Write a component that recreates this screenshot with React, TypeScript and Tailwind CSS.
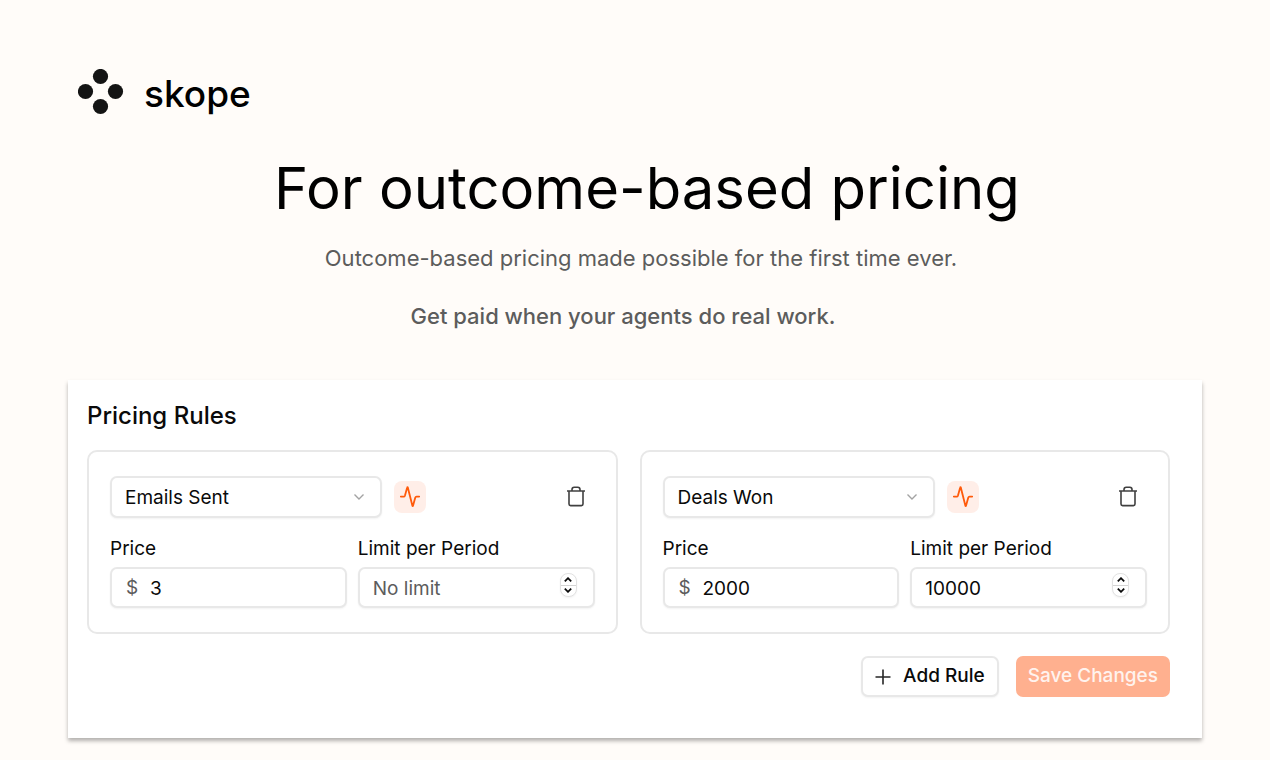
import { useId, useState } from 'react';

type Rule = {
  metric: string;
  price: string;
  limit: string;
};

const METRICS = ['Emails Sent', 'Deals Won'];

const initialRules: Rule[] = [
  { metric: 'Emails Sent', price: '3', limit: '' },
  { metric: 'Deals Won', price: '2000', limit: '10000' },
];

function Logo() {
  return (
    <svg viewBox="0 0 46 46" className="w-[46px] h-[46px]" fill="#141414" aria-hidden="true">
      <circle cx="22.5" cy="7.5" r="7.6" />
      <circle cx="7.5" cy="22.5" r="7.6" />
      <circle cx="37.5" cy="22.5" r="7.6" />
      <circle cx="22.5" cy="37.5" r="7.6" />
    </svg>
  );
}

function ActivityIcon() {
  return (
    <svg
      viewBox="0 0 20 22"
      className="w-5 h-[22px]"
      fill="none"
      stroke="#ff5a0a"
      strokeWidth="1.8"
      strokeLinecap="round"
      strokeLinejoin="round"
      aria-hidden="true"
    >
      <path d="M.8 10.600h2.900c.6 0 1-.3 1.200-.9L7.200 1.500c.1-.4.5-.4.6 0l4.600 18.200c.1.4.5.4.6 0l2.300-8.200c.2-.6.6-.9 1.200-.9h2.700" />
    </svg>
  );
}

function TrashIcon() {
  return (
    <svg
      viewBox="0 0 20 22"
      className="w-5 h-[22px]"
      fill="none"
      stroke="#404040"
      strokeWidth="1.6"
      strokeLinejoin="round"
      aria-hidden="true"
    >
      <path d="M1 5h18M3 5v13c0 1 .7 1.600 1.600 1.600h10.800c.9 0 1.600-.6 1.600-1.600V5M6 5V3.500c0-1.400.9-2.300 2.200-2.300h3.600C13.100 1.200 14 2.100 14 3.500V5" />
    </svg>
  );
}

function ChevronIcon() {
  return (
    <svg
      viewBox="0 0 12 8"
      className="absolute right-[17px] top-[17px] w-3 h-2 pointer-events-none"
      fill="none"
      stroke="#a3a3a3"
      strokeWidth="1.4"
      aria-hidden="true"
    >
      <path d="M1.500 1.500 6 6l4.500-4.500" />
    </svg>
  );
}

function Stepper({ onStep }: { onStep: (delta: number) => void }) {
  return (
    <div className="absolute right-[18px] top-1.5 w-[17px] h-6 flex flex-col rounded-lg border border-[#e2e2e2] bg-white divide-y divide-[#d4d4d4] shadow-xs">
      <button type="button" aria-label="Increase limit" onClick={() => onStep(1)} className="flex-1 flex items-center justify-center">
        <svg viewBox="0 0 8 5" className="w-2 h-[5px]" fill="none" stroke="#0a0a0a" strokeWidth="1.8">
          <path d="M.8 4.300 4 1.200l3.200 3.100" />
        </svg>
      </button>
      <button type="button" aria-label="Decrease limit" onClick={() => onStep(-1)} className="flex-1 flex items-center justify-center">
        <svg viewBox="0 0 8 5" className="w-2 h-[5px]" fill="none" stroke="#0a0a0a" strokeWidth="1.8">
          <path d="M.8.700 4 3.800l3.200-3.100" />
        </svg>
      </button>
    </div>
  );
}

function RuleCard({ rule, onChange, onRemove }: { rule: Rule; onChange: (rule: Rule) => void; onRemove: () => void }) {
  const id = useId();

  const handleStep = (delta: number) => {
    const next = Math.max(0, Number(rule.limit || 0) + delta);
    onChange({ ...rule, limit: String(next) });
  };

  return (
    <article className="rounded-[10px] border-2 border-[#e8e8e8] px-[21px] py-6">
      {/* Metric */}
      <div className="flex items-center gap-3">
        <div className="relative w-[272px]">
          <select
            aria-label="Metric"
            value={rule.metric}
            onChange={e => onChange({ ...rule, metric: e.target.value })}
            className="block w-full h-[42px] appearance-none rounded-[7px] border-2 border-[#e8e8e8] bg-white pl-[13px] pr-10 pt-0.5 shadow-xs"
          >
            {METRICS.map(metric => (
              <option key={metric}>{metric}</option>
            ))}
          </select>
          <ChevronIcon />
        </div>
        <span className="w-8 h-8 rounded-lg bg-[#ffeee8] flex items-center justify-center">
          <ActivityIcon />
        </span>
        <button type="button" aria-label="Delete rule" onClick={onRemove} className="ml-auto mr-[9px]">
          <TrashIcon />
        </button>
      </div>

      {/* Price and limit */}
      <div className="grid grid-cols-2 gap-[11px] mt-[19px]">
        <div>
          <label htmlFor={`${id}-price`} className="block leading-6">
            Price
          </label>
          <div className="relative mt-1.5">
            <span className="absolute left-4 top-[9px] leading-6 text-[#5c5c5c]">$</span>
            <input
              id={`${id}-price`}
              inputMode="numeric"
              value={rule.price}
              onChange={e => onChange({ ...rule, price: e.target.value })}
              className="block w-full h-[41px] rounded-[7px] border-2 border-[#e8e8e8] bg-white pl-[38px] pr-3 pt-0.5 shadow-xs"
            />
          </div>
        </div>
        <div>
          <label htmlFor={`${id}-limit`} className="block leading-6">
            Limit per Period
          </label>
          <div className="relative mt-1.5">
            <input
              id={`${id}-limit`}
              inputMode="numeric"
              placeholder="No limit"
              value={rule.limit}
              onChange={e => onChange({ ...rule, limit: e.target.value })}
              className="block w-full h-[41px] rounded-[7px] border-2 border-[#e8e8e8] bg-white pl-[13px] pr-10 pt-0.5 shadow-xs placeholder:text-[#5c5c5c]"
            />
            <Stepper onStep={handleStep} />
          </div>
        </div>
      </div>
    </article>
  );
}

export default function App() {
  const [rules, setRules] = useState(initialRules);

  const updateRule = (index: number, rule: Rule) => {
    setRules(prev => prev.map((item, i) => (i === index ? rule : item)));
  };

  const removeRule = (index: number) => {
    setRules(prev => prev.filter((_, i) => i !== index));
  };

  const addRule = () => {
    setRules(prev => [...prev, { metric: METRICS[0], price: '', limit: '' }]);
  };

  return (
    <div className="min-h-screen bg-[#fffcf9] px-[68px] pt-[68px] pb-[22px] font-['Inter',sans-serif] text-[#0a0a0a]">
      {/* Brand */}
      <header className="flex items-center gap-5 pl-[10px]">
        <Logo />
        <span className="pt-1 text-[37px] leading-[44px] font-medium text-black">skope</span>
      </header>

      {/* Hero */}
      <section className="mt-8 text-center text-[22px] leading-8 text-[#5c5c5c]">
        <h1 className="pl-6 text-[58px] leading-[80px] text-black">For outcome-based pricing</h1>
        <p className="mt-[14px] pl-3">Outcome-based pricing made possible for the first time ever.</p>
        <p className="mt-[26px] pr-6 font-medium">Get paid when your agents do real work.</p>
      </section>

      {/* Pricing rules */}
      <main className="mt-12 bg-white pl-[19px] pr-8 pt-5 pb-[41px] text-[19px] shadow-[0_3px_4px_rgba(0,0,0,0.3)]">
        <h2 className="text-2xl leading-8 font-medium">Pricing Rules</h2>
        <div className="mt-[18px] grid grid-cols-2 gap-[22px]">
          {rules.map((rule, i) => (
            <RuleCard key={i} rule={rule} onChange={next => updateRule(i, next)} onRemove={() => removeRule(i)} />
          ))}
        </div>
        <div className="mt-[22px] flex justify-end gap-[17px]">
          <button
            type="button"
            onClick={addRule}
            className="h-[41px] flex items-center gap-3 rounded-[7px] border-2 border-[#e8e8e8] bg-white px-3 font-medium shadow-xs"
          >
            <svg viewBox="0 0 16 16" className="w-4 h-4" stroke="#262626" strokeWidth="1.6" aria-hidden="true">
              <path d="M8 .5v15M.5 8h15" />
            </svg>
            Add Rule
          </button>
          <button type="button" className="h-[41px] rounded-[7px] bg-[#ffb08f] px-3 font-medium text-[#fff3ee]">
            Save Changes
          </button>
        </div>
      </main>
    </div>
  );
}
